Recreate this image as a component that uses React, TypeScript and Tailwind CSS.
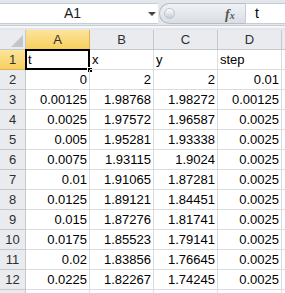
import React from 'react';

const rows: string[][] = [
  ['t', 'x', 'y', 'step'],
  ['0', '2', '2', '0.01'],
  ['0.00125', '1.98768', '1.98272', '0.00125'],
  ['0.0025', '1.97572', '1.96587', '0.0025'],
  ['0.005', '1.95281', '1.93338', '0.0025'],
  ['0.0075', '1.93115', '1.9024', '0.0025'],
  ['0.01', '1.91065', '1.87281', '0.0025'],
  ['0.0125', '1.89121', '1.84451', '0.0025'],
  ['0.015', '1.87276', '1.81741', '0.0025'],
  ['0.0175', '1.85523', '1.79141', '0.0025'],
  ['0.02', '1.83856', '1.76645', '0.0025'],
  ['0.0225', '1.82267', '1.74245', '0.0025'],
  ['', '', '', ''],
];

const cols = ['A', 'B', 'C', 'D'];

const App: React.FC = () => {
  return (
    <div className="w-[285px] h-[293px] overflow-hidden bg-white text-[13px] text-black font-['Liberation_Sans',sans-serif]">
      {/* Formula bar */}
      <div className="h-[30px] bg-[#e3e7ec] pt-[3px] flex flex-col">
        <div className="h-[21px] flex items-stretch">
          <div className="w-[158px] bg-white border-y border-[#c6ccd4] flex items-center relative">
            <span className="w-[145px] text-center text-[14px] text-[#1a1a1a]">A1</span>
            <svg width="8" height="5" className="absolute left-[148px] top-[8px]" viewBox="0 0 8 5">
              <path d="M0 0 L8 0 L4 4 Z" fill="#444" />
            </svg>
          </div>
          <div className="w-[87px] relative flex items-center">
            <div className="absolute left-[1px] top-0 bottom-0 right-0 rounded-l-full bg-gradient-to-b from-[#f0f2f5] to-[#dadee4] border-y border-l border-[#b5bdc7]" />
            <div className="absolute left-[6px] top-[5px] w-[11px] h-[11px] rounded-full bg-gradient-to-b from-[#ffffff] to-[#c6ccd4] border border-[#bcc3cc]" />
            <span className="absolute left-[67px] top-[1px] text-[14px] italic font-bold font-['Liberation_Serif',serif] text-[#555]">
              f<span className="text-[10px]">x</span>
            </span>
          </div>
          <div className="flex-1 bg-white border-y border-l border-[#c6ccd4] flex items-center pl-[9px] text-[14px]">t</div>
        </div>
        <div className="h-[3px] border-t border-[#c9ced5] bg-[#f4f6f8] mt-[1px]" />
      </div>

      {/* Grid */}
      <div className="grid grid-cols-[26px_64px_64px_64px_64px_1fr]">
        {/* header row */}
        <div className="h-[20px] bg-[#e9ebee] border-r border-b border-[#c5c9ce] relative">
          <svg width="12" height="12" className="absolute right-[2px] bottom-[2px]" viewBox="0 0 12 12">
            <path d="M12 0 L12 12 L0 12 Z" fill="#c2c6cb" />
          </svg>
        </div>
        {cols.map((c, i) => (
          <div
            key={c}
            className={`h-[20px] border-r border-b flex items-center justify-center text-[#2f2f2f] ${
              i === 0
                ? 'bg-gradient-to-b from-[#fce49a] to-[#f7cf5c] border-[#d9b35a]'
                : 'bg-[#e9ebee] border-[#c5c9ce]'
            }`}
          >
            {c}
          </div>
        ))}
        <div className="h-[20px] bg-[#e9ebee] border-b border-[#c5c9ce]" />

        {rows.map((r, ri) => (
          <React.Fragment key={ri}>
            <div
              className={`h-[20px] border-r border-b flex items-center justify-center text-[#2f2f2f] ${
                ri === 0
                  ? 'bg-gradient-to-b from-[#fce49a] to-[#f7cf5c] border-[#d9b35a]'
                  : 'bg-[#e9ebee] border-[#c5c9ce]'
              }`}
            >
              {ri < 12 ? ri + 1 : ''}
            </div>
            {r.map((v, ci) => (
              <div
                key={ci}
                className={`h-[20px] border-r border-b border-[#dadcdd] flex items-center px-[2px] relative ${
                  ri === 0 ? 'justify-start' : 'justify-end'
                }`}
              >
                {v}
                {ri === 0 && ci === 0 && (
                  <>
                    <div className="absolute left-[-1px] top-[-1px] w-[65px] h-[21px] border-2 border-black pointer-events-none" />
                    <div className="absolute right-[-4px] bottom-[-4px] w-[6px] h-[6px] bg-black border border-white" />
                  </>
                )}
              </div>
            ))}
            <div className="h-[20px] border-b border-[#dadcdd]" />
          </React.Fragment>
        ))}
      </div>
    </div>
  );
};

export default App;
